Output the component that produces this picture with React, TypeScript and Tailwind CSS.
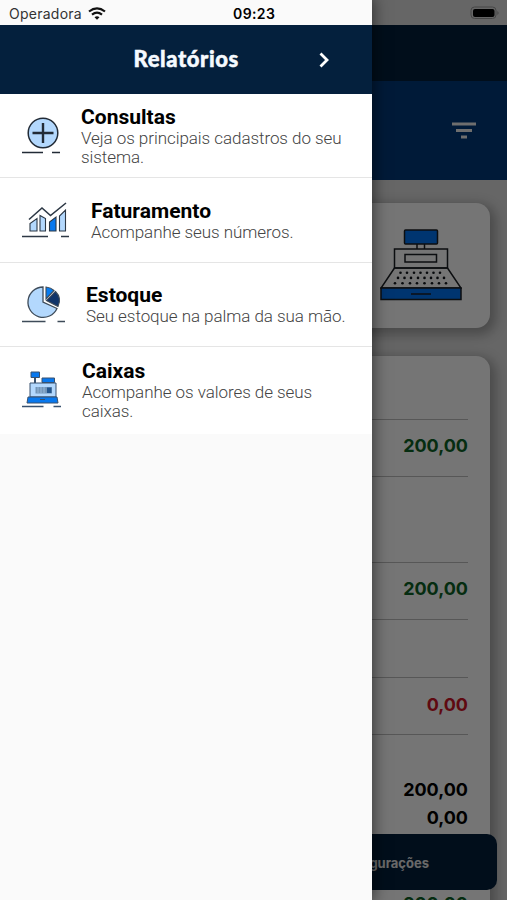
import type { ReactNode } from "react";

function ConsultasIcon() {
  return (
    <svg width="38" height="37" viewBox="0 0 38 37" fill="none" stroke="#222b36">
      <circle cx="21" cy="16" r="14.8" fill="#b3d8fd" strokeWidth="1.5" />
      <path d="M21 6v20M10.5 16h21" strokeWidth="2.4" />
      <path d="M0 35.5h21M30 35.5h8" strokeWidth="1.4" />
    </svg>
  );
}

function FaturamentoIcon() {
  return (
    <svg width="48" height="37" viewBox="0 0 48 37" fill="none" stroke="#2d3845">
      <path d="M7 18.5 20 7l8.500 7.500L44 2" strokeWidth="1.6" />
      <path d="M8 30V22.500L15 17.500V30zM18 30V14.500l5.500 3V30zM37.500 30V15L43.500 9V30z" fill="#b3d8fd" strokeWidth="1.1" />
      <path d="M27.500 30V21L34 16V30z" fill="#0878ee" strokeWidth="1.1" />
      <path d="M0 35.500h26M39 35.500h8" strokeWidth="1.5" />
    </svg>
  );
}

function EstoqueIcon() {
  return (
    <svg width="43" height="37" viewBox="0 0 43 37" fill="none" stroke="#3e4b59">
      <path d="M21 1A15.200 15.200 0 1 0 35 22.500L21 16z" fill="#b3d8fd" strokeWidth="1.3" />
      <path d="M24 1v12L32 4.500Q29 1.500 24 1z" fill="#087cf0" strokeWidth="1.1" />
      <path d="M33.500 5.500 24.500 14.500 36 20.500Q40 12 33.500 5.500z" fill="#10346a" strokeWidth="1.1" />
      <path d="M0 35.500h23.500M35.500 35.500H43" strokeWidth="1.5" />
    </svg>
  );
}

function CaixasIcon() {
  return (
    <svg width="39" height="37" viewBox="0 0 39 37" fill="none" stroke="#38516e">
      <path d="M13 6v6" strokeWidth="2" />
      <path d="M9 1h8.500v5.500H9z" fill="#0878ee" strokeWidth="1" />
      <path d="M8 12h26v14H8z" fill="#b3d8fd" strokeWidth="1" />
      <path d="M20 7h12.500v4.500H20z" fill="#0878ee" strokeWidth="1" />
      <path d="M13.500 16H30v6.500H13.500z" fill="#7396b9" stroke="none" />
      <path d="M16 16v6M19 16v6M22 16v6" stroke="#a6c8e8" strokeWidth=".7" />
      <path d="M25 16.500h4.500V22H25z" fill="#24558c" stroke="none" />
      <path d="M6 26h29l1 6H5z" fill="#0878ee" strokeWidth="1" />
      <path d="M18 28.500h5" strokeWidth="1" />
      <path d="M0 35.500h21.500M31.500 35.500H39" strokeWidth="1.4" />
    </svg>
  );
}

const keyRows = [
  { y: 43.7, xs: [20.500, 27, 34, 40.500, 47, 53.500, 60] },
  { y: 48.9, xs: [18, 24.500, 31, 38, 44.500, 51, 57.500, 64] },
  { y: 54.2, xs: [15, 22.500, 30, 37, 44.500, 52, 59, 66] },
];

function RegisterIcon() {
  return (
    <svg width="82" height="72" viewBox="0 0 82 72" fill="none" stroke="#1b1f24" strokeWidth="1.5">
      <path d="M37 15v5M44.500 15v5" />
      <rect x="24.500" y="1" width="33" height="14" rx="1" fill="#0075f5" />
      <path d="M14.500 20h53v19h-53zM25 25.500h31.500V33H25z" />
      <path d="M14.500 39 1 59h80L67.500 39z" />
      <path d="M1 59h80v11.500H1z" fill="#0075f5" />
      <path d="M31 65h20" />
      <g fill="#10151b" stroke="none">
        {keyRows.map((row) => row.xs.map((x) => <circle key={`${row.y}-${x}`} cx={x} cy={row.y} r="1.300" />))}
      </g>
    </svg>
  );
}

const menu: { title: string; text: string; icon: ReactNode }[] = [
  { title: "Consultas", text: "Veja os principais cadastros do seu sistema.", icon: <ConsultasIcon /> },
  { title: "Faturamento", text: "Acompanhe seus números.", icon: <FaturamentoIcon /> },
  { title: "Estoque", text: "Seu estoque na palma da sua mão.", icon: <EstoqueIcon /> },
  { title: "Caixas", text: "Acompanhe os valores de seus caixas.", icon: <CaixasIcon /> },
];

function Dashboard() {
  return (
    <div className="flex h-full flex-col bg-[#dedede]">
      {/* Status bar */}
      <div className="flex h-[25px] shrink-0 items-center justify-end pr-[7px]">
        <svg width="30" height="14" viewBox="0 0 30 14">
          <rect x="1" y="1" width="25" height="11.500" rx="3.500" fill="none" stroke="#999" />
          <rect x="3" y="3" width="21.500" height="8" rx="2" />
          <path d="M27.500 5q2 1.800 0 4z" fill="#888" />
        </svg>
      </div>
      <div className="h-[56px] shrink-0 bg-[#04203c]" />
      <div className="flex h-[99px] shrink-0 justify-end bg-[#003a7a] pt-[41px] pr-[31px]">
        <svg width="24" height="18" viewBox="0 0 24 18" stroke="#efefef" strokeWidth="2.8">
          <path d="M0 2h24M4 8.500h16M9 15h6" />
        </svg>
      </div>

      {/* Cards */}
      <div className="flex flex-col gap-7 px-[17px] pt-[23px]">
        <div className="flex h-[125px] items-start justify-end rounded-[14px] bg-white pt-[26px] pr-[28px] shadow-[3px_4px_12px_3px_rgba(0,0,0,0.28)]">
          <RegisterIcon />
        </div>
        <div className="flex h-[640px] flex-col rounded-t-[14px] bg-white pr-[22px] pl-5 text-right font-['Inter'] text-[18px] font-bold shadow-[3px_4px_12px_3px_rgba(0,0,0,0.28)]">
          <div className="h-[64px] shrink-0 border-b border-[#bdbdbd]" />
          <div className="h-[57px] shrink-0 border-b border-[#bdbdbd] leading-[52px] text-[#0c6226]">200,00</div>
          <div className="h-[86px] shrink-0 border-b border-[#bdbdbd]" />
          <div className="h-[57px] shrink-0 border-b border-[#bdbdbd] leading-[52px] text-[#0c6226]">200,00</div>
          <div className="h-[58px] shrink-0 border-b border-[#bdbdbd]" />
          <div className="h-[57px] shrink-0 border-b border-[#bdbdbd] leading-[53px] text-[#d01427]">0,00</div>
          <div className="pt-[41px] leading-7 text-black">
            <div>200,00</div>
            <div>0,00</div>
          </div>
          <div className="pt-[58px] leading-7 text-[#0c6226]">200,00</div>
        </div>
      </div>
    </div>
  );
}

function Drawer() {
  return (
    <aside className="absolute inset-y-0 left-0 flex w-[372px] flex-col bg-[#fafafa] shadow-[0_0_14px_2px_rgba(0,0,0,0.5)]">
      <div className="flex h-[25px] shrink-0 items-center pt-[2px] pl-[9px] font-['Inter'] text-[14px] text-[#333]">
        <span className="w-[79px] tracking-[0.25px]">Operadora</span>
        <svg width="18" height="13" viewBox="0 0 18 13" fill="none" stroke="#111" strokeWidth="2.2">
          <path d="M1 4.500Q9-1.800 17 4.500M4 7.700Q9 3.700 14 7.700" />
          <path d="M6.500 10.200Q9 8.200 11.500 10.200L9 12.700z" fill="#111" stroke="none" />
        </svg>
        <span className="ml-[127px] text-[14px] font-semibold tracking-[0.4px] text-black">09:23</span>
      </div>
      <div className="flex h-[69px] shrink-0 items-center justify-center bg-[#04203d] font-['Lato'] text-[22px] font-black tracking-[0.6px] text-[#f5faff] [-webkit-text-stroke:0.5px_#f5faff]">
        <span className="w-[105px] pb-0.5">Relatórios</span>
        <svg className="-mr-[90px] ml-[80px]" width="10" height="16" viewBox="0 0 10 16" fill="none" stroke="white" strokeWidth="2.8">
          <path d="m1.500 1.500 6.500 6.500-6.500 6.500" />
        </svg>
      </div>
      {menu.map((item) => (
        <div key={item.title} className="flex h-[84.250px] shrink-0 items-center gap-[21px] border-b border-[#e5e5e5] bg-white pr-6 pl-[22px] font-['Roboto'] last:h-[87px] last:border-transparent">
          <div className="shrink-0">{item.icon}</div>
          <div className="pt-px">
            <h2 className="text-[21px] leading-[24px] font-bold tracking-[0.02px] text-black">{item.title}</h2>
            <p className="text-[17px] leading-[19.500px] font-light tracking-[-0.06px] text-[#444]">{item.text}</p>
          </div>
        </div>
      ))}
    </aside>
  );
}

export default function App() {
  return (
    <main className="relative h-[900px] w-[507px] overflow-hidden">
      <Dashboard />
      <div className="absolute right-[10px] bottom-[10px] left-[10px] flex h-[56px] items-center justify-end rounded-[10px] bg-[#04203c] pt-[3px] pr-[68px] font-['Inter'] text-[13px] font-bold text-[#e5e5e5]">
        Configurações
      </div>
      <div className="absolute inset-0 bg-black/54" />
      <Drawer />
    </main>
  );
}
